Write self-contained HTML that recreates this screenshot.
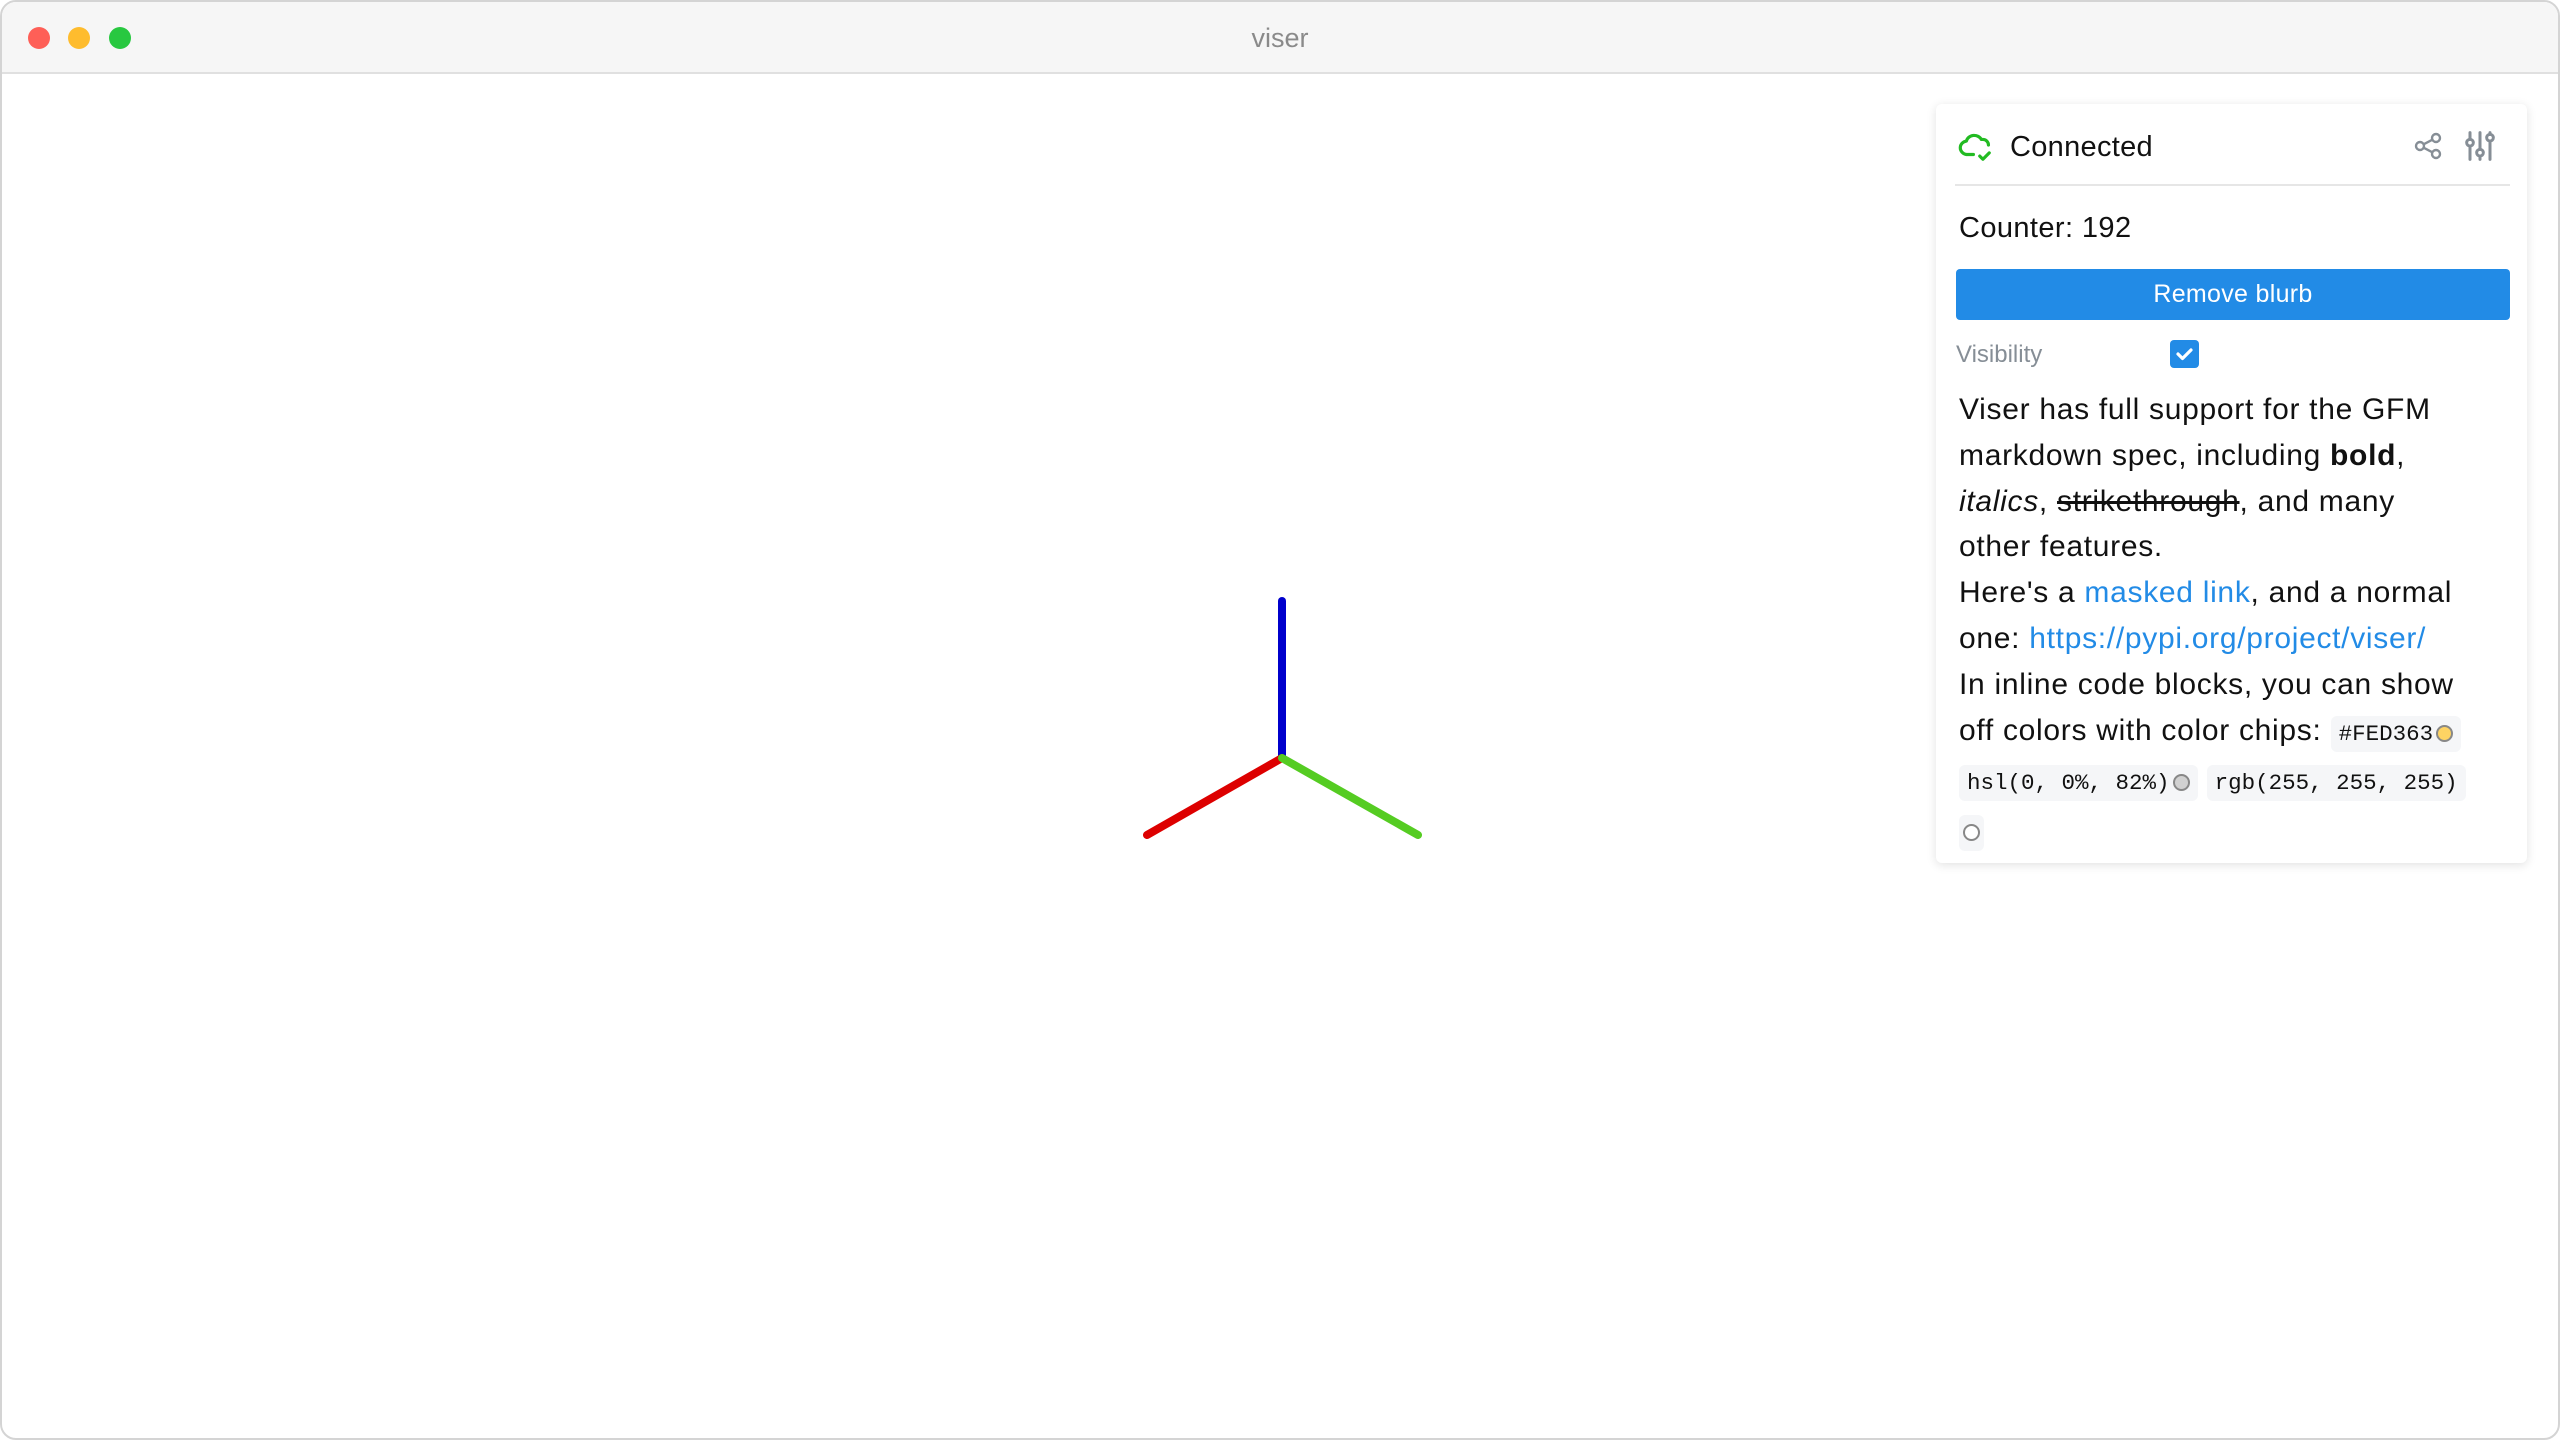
<!DOCTYPE html>
<html><head><meta charset="utf-8"><style>
*{margin:0;padding:0;box-sizing:border-box}
html,body{width:2560px;height:1440px;overflow:hidden;background:#fff;font-family:"Liberation Sans",sans-serif}
.win{position:absolute;left:0;top:0;width:2560px;height:1440px;border:2px solid #d4d4d4;border-radius:16px;overflow:hidden;background:#fff}
.tb{position:absolute;left:0;top:0;right:0;height:72px;background:#f6f6f6;border-bottom:2px solid #e0e0e0}
.tl{position:absolute;top:25px;width:22px;height:22px;border-radius:50%}
.title{position:absolute;left:0;right:0;top:21px;text-align:center;font-size:27px;color:#8a8a8a}
.panel{position:absolute;left:1936px;top:104px;width:591px;height:759px;background:#fff;border-radius:6px;box-shadow:0 2px 10px rgba(0,0,0,.12)}
.t{position:absolute;white-space:nowrap}
.md{position:absolute;left:1959px;top:387px;font-size:30px;letter-spacing:0.7px;line-height:45.8px;color:#111;white-space:nowrap}
.md a{color:#228be6;text-decoration:none}
code{font-family:"Liberation Mono",monospace;font-size:22.5px;letter-spacing:0;background:#f5f6f8;border-radius:6px;padding:5px 8px;color:#111}
.dot{display:inline-block;width:17px;height:17px;border-radius:50%;border:2px solid #888;vertical-align:-2px;margin-left:3px}
</style></head><body>
<div class="win">
<div class="tb">
<div class="tl" style="left:26px;background:#fe5f57"></div>
<div class="tl" style="left:66px;background:#febc2e"></div>
<div class="tl" style="left:107px;background:#28c840"></div>
<div class="title">viser</div>
</div>
<svg style="position:absolute;left:0;top:0" width="2560" height="1440">
<line x1="1280" y1="756" x2="1280" y2="599" stroke="#0000cc" stroke-width="8" stroke-linecap="round"/>
<line x1="1280" y1="756" x2="1145" y2="833" stroke="#dd0000" stroke-width="8" stroke-linecap="round"/>
<line x1="1280" y1="756" x2="1416" y2="833" stroke="#55cc22" stroke-width="8" stroke-linecap="round"/>
</svg>
</div>
<div class="panel"></div>
<svg style="position:absolute;left:1956px;top:126px" width="38" height="38" viewBox="0 0 24 24" fill="none" stroke="#22bb22" stroke-width="2" stroke-linecap="round" stroke-linejoin="round"><path d="M11 18H6.6A4.6 4.3 0 0 1 6.6 9.5 5 4.5 0 0 1 16 8.5h1a3.5 3.5 0 0 1 3.5 3.5"/><path d="M15 19l2 2 4-4"/></svg>
<div class="t" style="left:2010px;top:131px;font-size:29px;letter-spacing:0.3px;color:#111">Connected</div>
<svg style="position:absolute;left:2412px;top:130px" width="32" height="32" viewBox="0 0 24 24" fill="none" stroke="#868e96" stroke-width="1.8"><circle cx="6" cy="12" r="3"/><circle cx="18" cy="6" r="3"/><circle cx="18" cy="18" r="3"/><path d="M8.7 10.7l6.6-3.4M8.7 13.3l6.6 3.4"/></svg>
<svg style="position:absolute;left:2460px;top:126px" width="40" height="40" viewBox="0 0 24 24" fill="none" stroke="#868e96" stroke-width="1.8" stroke-linecap="round"><circle cx="6" cy="10" r="2"/><path d="M6 4v4M6 12v8"/><circle cx="12" cy="16" r="2"/><path d="M12 4v10M12 18v2"/><circle cx="18" cy="7" r="2"/><path d="M18 4v1M18 9v11"/></svg>
<div style="position:absolute;left:1955px;top:184px;width:555px;height:2px;background:#e6e6e6"></div>
<div class="t" style="left:1959px;top:212px;font-size:29px;letter-spacing:0.4px;color:#111">Counter: 192</div>
<div style="position:absolute;left:1956px;top:269px;width:554px;height:51px;background:#228be6;border-radius:4px;color:#fff;font-size:25px;letter-spacing:0.3px;text-align:center;line-height:51px">Remove blurb</div>
<div class="t" style="left:1956px;top:341px;font-size:24px;color:#868e96">Visibility</div>
<div style="position:absolute;left:2170px;top:340px;width:29px;height:28px;background:#228be6;border-radius:4px"><svg width="29" height="28" viewBox="0 0 29 28"><path d="M8 14l4.5 4.5L21 10" fill="none" stroke="#fff" stroke-width="3.2" stroke-linecap="round" stroke-linejoin="round"/></svg></div>
<div class="md">Viser has full support for the GFM<br>markdown spec, including <b>bold</b>,<br><i>italics</i>, <s>strikethrough</s>, and many<br>other features.<br>Here's a <a>masked link</a>, and a normal<br>one: <a>https://pypi.org/project/viser/</a><br>In inline code blocks, you can show<br>off colors with color chips: <code>#FED363<span class="dot" style="background:#fed363"></span></code><br><code>hsl(0, 0%, 82%)<span class="dot" style="background:#d1d1d1"></span></code> <code>rgb(255, 255, 255)</code><br><code style="padding:5px 4px"><span class="dot" style="background:#fff;margin:0"></span></code></div>
</body></html>
